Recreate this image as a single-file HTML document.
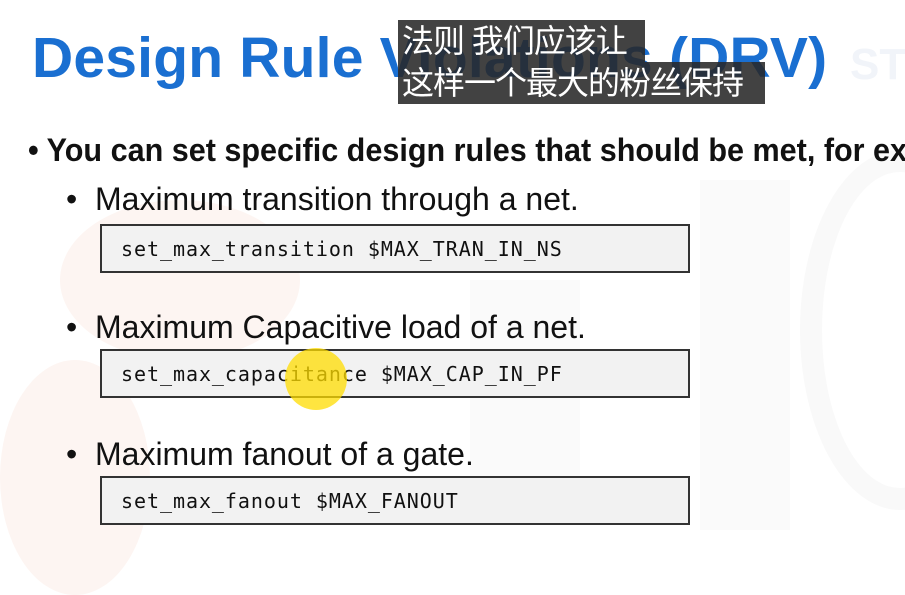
<!DOCTYPE html>
<html><head><meta charset="utf-8"><style>
html,body{margin:0;padding:0;width:905px;height:595px;overflow:hidden;background:#fff;position:relative;font-family:"Liberation Sans",Arial,sans-serif}
.a{position:absolute;white-space:nowrap}
.wm{position:absolute;}
.title{left:32px;top:25px;font-size:57px;font-weight:bold;color:#1a6fd1;letter-spacing:0.2px}
.sub{background:rgba(40,40,40,0.88);color:#fff;font-family:"Liberation Sans","Noto Sans CJK SC",sans-serif;font-size:32px;line-height:42px;padding:0 4px;letter-spacing:-1px}
.b1{left:28px;top:132px;font-size:32px;font-weight:bold;color:#111;transform:scaleX(0.955);transform-origin:left}
.b2{font-size:32px;color:#111;left:66px}
.box{position:absolute;left:100px;width:586px;height:45px;background:#f2f2f2;border:2px solid #333}
.code{position:absolute;left:19px;top:11px;font-family:"DejaVu Sans Mono","Liberation Mono",monospace;font-size:20px;letter-spacing:0.95px;color:#111}
#clip{position:absolute;left:0;top:0;width:905px;height:595px;overflow:hidden}
</style></head><body><div id="clip">
<div class="wm" style="left:60px;top:200px;width:240px;height:160px;border-radius:50%;background:#fdf5f2"></div>
<div class="wm" style="left:0px;top:360px;width:150px;height:235px;border-radius:50%;background:#fdf5f2"></div>
<div class="wm" style="left:470px;top:280px;width:110px;height:240px;background:#fafafa"></div>
<div class="wm" style="left:700px;top:180px;width:90px;height:350px;background:#fafafa"></div>
<div class="wm" style="left:800px;top:150px;width:200px;height:360px;border-radius:50%;border:22px solid #f9f9f9;box-sizing:border-box"></div>
<div class="a title">Design Rule Violations (DRV)</div>
<div class="a" style="left:850px;top:40px;font-size:44px;font-weight:bold;color:#f1f4f9">ST</div>
<div class="a sub" style="left:398px;top:20px;width:239px">法则 我们应该让</div>
<div class="a sub" style="left:398px;top:62px;width:359px">这样一个最大的粉丝保持</div>
<div class="a b1">• You can set specific design rules that should be met, for ex</div>
<div class="a b2" style="top:181px">•&nbsp; Maximum transition through a net.</div>
<div class="box" style="top:224px"><div class="code">set_max_transition $MAX_TRAN_IN_NS</div></div>
<div class="a b2" style="top:309px">•&nbsp; Maximum Capacitive load of a net.</div>
<div class="box" style="top:349px"><div class="code">set_max_capacitance $MAX_CAP_IN_PF</div></div>
<div class="a b2" style="top:436px">•&nbsp; Maximum fanout of a gate.</div>
<div class="box" style="top:476px"><div class="code">set_max_fanout $MAX_FANOUT</div></div>
<div class="wm" style="left:285px;top:348px;width:62px;height:62px;border-radius:50%;background:rgba(255,220,0,0.75)"></div>
</div></body></html>
